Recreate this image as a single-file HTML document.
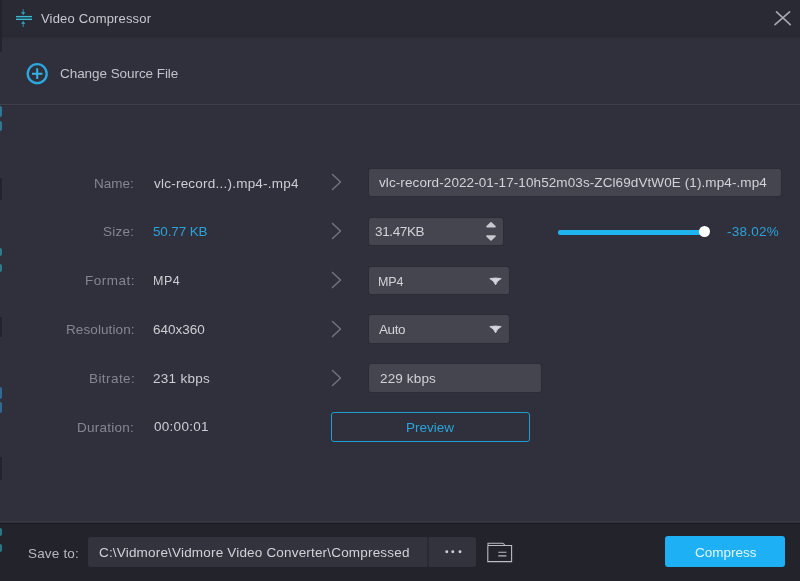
<!DOCTYPE html>
<html><head><meta charset="utf-8">
<style>
*{margin:0;padding:0;box-sizing:border-box}
html,body{width:800px;height:581px;overflow:hidden;background:#30303c;font-family:"Liberation Sans",sans-serif}
.abs{position:absolute}
.tx{position:absolute;white-space:nowrap;line-height:16px;will-change:transform}
.box{position:absolute;background:#45454f;border-radius:2.5px;box-shadow:0 0 0 1px #2c2c36}
</style></head><body>
<div class="abs" style="left:0;top:0;width:800px;height:36px;background:#2a2a35"></div>
<div class="abs" style="left:0;top:35px;width:800px;height:2px;background:#282832"></div>
<div class="abs" style="left:0;top:37px;width:800px;height:1.5px;background:#2d2d38"></div>
<svg class="abs" style="left:0;top:0" width="40" height="36" viewBox="0 0 40 36">
  <rect x="16" y="17.2" width="16" height="1.6" fill="#1f4c5c"/>
  <g stroke="#3db9d0" fill="none" stroke-width="1.25">
    <line x1="16" y1="16.55" x2="32" y2="16.55"/>
    <line x1="16" y1="19.4" x2="32" y2="19.4"/>
  </g>
  <g stroke="#2a93aa" fill="none" stroke-width="1">
    <line x1="23.2" y1="9.2" x2="23.2" y2="13"/>
    <line x1="23.2" y1="23" x2="23.2" y2="27"/>
  </g>
  <path d="M21.1 12 L25.3 12 L23.2 15.2Z M21.1 24 L25.3 24 L23.2 20.8Z" fill="#2a9cb4"/>
</svg>
<svg class="abs" style="left:770px;top:5px" width="26" height="26" viewBox="0 0 26 26">
  <path d="M6.5 6.8 L20.2 19.6 M19.6 6.8 L5 19.6" stroke="#a8a8b2" stroke-width="1.6" stroke-linecap="round"/>
</svg>
<svg class="abs" style="left:25px;top:62px" width="24" height="24" viewBox="0 0 24 24">
  <circle cx="12.2" cy="11.7" r="9.5" stroke="#2ba8e0" stroke-width="2.3" fill="none"/>
  <path d="M12.2 6.3 V17.1 M7 11.7 H17.4" stroke="#34b2ea" stroke-width="2"/>
</svg>
<div class="abs" style="left:0;top:104px;width:800px;height:1px;background:#40404b"></div>
<div class="abs" style="left:0;top:105px;width:800px;height:1px;background:#2d2d38"></div>
<svg class="abs" style="left:330px;top:173px" width="12" height="18" viewBox="0 0 12 18"><path d="M2.5 1.5 L10.5 9 L2.5 16.5" stroke="#72727c" stroke-width="1.5" fill="none" stroke-linecap="round" stroke-linejoin="round"/></svg>
<svg class="abs" style="left:330px;top:222px" width="12" height="18" viewBox="0 0 12 18"><path d="M2.5 1.5 L10.5 9 L2.5 16.5" stroke="#72727c" stroke-width="1.5" fill="none" stroke-linecap="round" stroke-linejoin="round"/></svg>
<svg class="abs" style="left:330px;top:271px" width="12" height="18" viewBox="0 0 12 18"><path d="M2.5 1.5 L10.5 9 L2.5 16.5" stroke="#72727c" stroke-width="1.5" fill="none" stroke-linecap="round" stroke-linejoin="round"/></svg>
<svg class="abs" style="left:330px;top:319.5px" width="12" height="18" viewBox="0 0 12 18"><path d="M2.5 1.5 L10.5 9 L2.5 16.5" stroke="#72727c" stroke-width="1.5" fill="none" stroke-linecap="round" stroke-linejoin="round"/></svg>
<svg class="abs" style="left:330px;top:368.5px" width="12" height="18" viewBox="0 0 12 18"><path d="M2.5 1.5 L10.5 9 L2.5 16.5" stroke="#72727c" stroke-width="1.5" fill="none" stroke-linecap="round" stroke-linejoin="round"/></svg>
<div class="box" style="left:368.5px;top:168.75px;width:412px;height:26.75px"></div>
<div class="box" style="left:369px;top:217.5px;width:134px;height:27.5px"></div>
<svg class="abs" style="left:484px;top:221px" width="14" height="22" viewBox="0 0 14 22"><path d="M3 5.6 L7 1.9 L11 5.6Z M3 15.1 L7 18.8 L11 15.1Z" fill="#c8c8d0" stroke="#c8c8d0" stroke-width="1.6" stroke-linejoin="round"/></svg>
<div class="abs" style="left:558px;top:230px;width:146px;height:4.5px;background:#1fb3ef;border-radius:2px"></div>
<div class="abs" style="left:698.5px;top:225.9px;width:11.6px;height:11.6px;background:#fff;border-radius:50%"></div>
<div class="box" style="left:369px;top:266.5px;width:140px;height:27.5px"></div>
<svg class="abs" style="left:488px;top:276.6px" width="15" height="10" viewBox="0 0 15 10"><path d="M1.8 1.6 Q7.5 0.4 13.2 1.6 Q9 3.6 7.6 7.8 Q6 3.6 1.8 1.6Z" fill="#d4d4dc" stroke="#d4d4dc" stroke-width="0.9" stroke-linejoin="round"/></svg>
<div class="box" style="left:369px;top:315px;width:140px;height:27.5px"></div>
<svg class="abs" style="left:488px;top:325.1px" width="15" height="10" viewBox="0 0 15 10"><path d="M1.8 1.6 Q7.5 0.4 13.2 1.6 Q9 3.6 7.6 7.8 Q6 3.6 1.8 1.6Z" fill="#d4d4dc" stroke="#d4d4dc" stroke-width="0.9" stroke-linejoin="round"/></svg>
<div class="box" style="left:369px;top:364px;width:172px;height:27.75px"></div>
<div class="abs" style="left:330.5px;top:411.75px;width:199.75px;height:30px;border:1.5px solid #1e9fd0;border-radius:3px"></div>

<div class="abs" style="left:0;top:523px;width:800px;height:58px;background:#23232c"></div>
<div class="abs" style="left:0;top:521px;width:800px;height:1px;background:#383843"></div>
<div class="abs" style="left:0;top:522.5px;width:800px;height:1.5px;background:#1a1a22"></div>
<div class="abs" style="left:88px;top:537px;width:388px;height:30px;background:#33333e;border-radius:3px"></div>
<div class="abs" style="left:427px;top:537px;width:1.5px;height:30px;background:#2a2a34"></div>
<svg class="abs" style="left:440px;top:546px" width="26" height="12" viewBox="0 0 26 12">
  <circle cx="6.8" cy="5.8" r="1.45" fill="#d0d0d8"/><circle cx="12.8" cy="5.8" r="1.45" fill="#d0d0d8"/><circle cx="20" cy="5.8" r="1.45" fill="#d0d0d8"/>
</svg>
<svg class="abs" style="left:485px;top:540px" width="30" height="25" viewBox="0 0 30 25">
  <path d="M2.8 5.5 V21.6 H26.6 V5.5 H2.8 M3 5.3 V3.3 H17.5 Q19 3.3 19.8 5.5" stroke="#bcbcc4" stroke-width="1.1" fill="none"/>
  <path d="M13.3 12.3 H21.4 M13.3 15.9 H21.4" stroke="#bcbcc4" stroke-width="1.1"/>
</svg>
<div class="abs" style="left:665px;top:536px;width:120px;height:31px;background:#1eb0f5;border-radius:3px"></div>
<div id="t_title" class="tx" style="left:41.00px;top:11.00px;font-size:13px;letter-spacing:0.173px;color:#c8c8d0;">Video Compressor</div>
<div id="t_change" class="tx" style="left:60.00px;top:65.80px;font-size:13.5px;letter-spacing:-0.059px;color:#c2c2ca;">Change Source File</div>
<div id="l_name" class="tx" style="left:94.00px;top:175.80px;font-size:13.5px;letter-spacing:0.000px;color:#868690;">Name:</div>
<div id="l_size" class="tx" style="left:103.00px;top:224.20px;font-size:13.5px;letter-spacing:0.250px;color:#868690;">Size:</div>
<div id="l_format" class="tx" style="left:85.00px;top:273.00px;font-size:13.5px;letter-spacing:0.500px;color:#868690;">Format:</div>
<div id="l_res" class="tx" style="left:66.00px;top:322.00px;font-size:13.5px;letter-spacing:0.100px;color:#868690;">Resolution:</div>
<div id="l_bit" class="tx" style="left:89.00px;top:371.20px;font-size:13.5px;letter-spacing:0.429px;color:#868690;">Bitrate:</div>
<div id="l_dur" class="tx" style="left:77.00px;top:420.20px;font-size:13.5px;letter-spacing:0.250px;color:#868690;">Duration:</div>
<div id="v_name" class="tx" style="left:154.00px;top:175.60px;font-size:13.5px;letter-spacing:0.227px;color:#cdcdd4;">vlc-record...).mp4-.mp4</div>
<div id="v_size" class="tx" style="left:153.00px;top:224.20px;font-size:13.5px;letter-spacing:-0.143px;color:#2aa3d8;">50.77 KB</div>
<div id="v_format" class="tx" style="left:153.00px;top:273.00px;font-size:12.5px;letter-spacing:0.500px;color:#cdcdd4;">MP4</div>
<div id="v_res" class="tx" style="left:153.00px;top:322.00px;font-size:13.5px;letter-spacing:0.000px;color:#cdcdd4;">640x360</div>
<div id="v_bit" class="tx" style="left:153.00px;top:371.20px;font-size:13.5px;letter-spacing:0.286px;color:#cdcdd4;">231 kbps</div>
<div id="v_dur" class="tx" style="left:154.00px;top:419.40px;font-size:13.5px;letter-spacing:0.286px;color:#cdcdd4;">00:00:01</div>
<div id="b_name" class="tx" style="left:379.00px;top:175.00px;font-size:13.5px;letter-spacing:0.093px;color:#d2d2d8;">vlc-record-2022-01-17-10h52m03s-ZCl69dVtW0E (1).mp4-.mp4</div>
<div id="b_size" class="tx" style="left:375.00px;top:224.00px;font-size:13.5px;letter-spacing:-0.367px;color:#d2d2d8;">31.47KB</div>
<div id="pct" class="tx" style="left:727.00px;top:224.40px;font-size:13.5px;letter-spacing:0.250px;color:#2aa3d8;">-38.02%</div>
<div id="b_format" class="tx" style="left:378.00px;top:273.80px;font-size:12.5px;letter-spacing:-0.100px;color:#d2d2d8;">MP4</div>
<div id="b_res" class="tx" style="left:379.00px;top:322.00px;font-size:13.5px;letter-spacing:-0.400px;color:#d2d2d8;">Auto</div>
<div id="b_bit" class="tx" style="left:380.00px;top:370.60px;font-size:13.5px;letter-spacing:0.143px;color:#d2d2d8;">229 kbps</div>
<div id="preview" class="tx" style="left:406.00px;top:420.00px;font-size:13.5px;letter-spacing:-0.000px;color:#2aa3d8;">Preview</div>
<div id="saveto" class="tx" style="left:28.00px;top:545.60px;font-size:13.5px;letter-spacing:0.179px;color:#b8b8c0;">Save to:</div>
<div id="path" class="tx" style="left:99.00px;top:545.00px;font-size:13.5px;letter-spacing:0.182px;color:#d2d2d8;">C:\Vidmore\Vidmore Video Converter\Compressed</div>
<div id="compress" class="tx" style="left:695.00px;top:545.20px;font-size:13.5px;letter-spacing:0.000px;color:#e4f6ff;">Compress</div>
<div class="abs" style="left:0;top:0px;width:1.5px;height:52px;background:#23232d"></div><div class="abs" style="left:0;top:178px;width:1.5px;height:22px;background:#23232d"></div><div class="abs" style="left:0;top:317px;width:1.5px;height:20px;background:#23232d"></div><div class="abs" style="left:0;top:457px;width:1.5px;height:23px;background:#23232d"></div>
<div class="abs" style="left:-1px;top:106px;width:2.5px;height:11px;background:#2f95c0;opacity:.7;border-radius:0 2px 2px 0"></div><div class="abs" style="left:-1px;top:121px;width:2.5px;height:10px;background:#2f95c0;opacity:.7;border-radius:0 2px 2px 0"></div><div class="abs" style="left:-1px;top:248px;width:2.5px;height:8px;background:#2c9cb0;opacity:.7;border-radius:0 2px 2px 0"></div><div class="abs" style="left:-1px;top:264px;width:2.5px;height:8px;background:#2c9cb0;opacity:.7;border-radius:0 2px 2px 0"></div><div class="abs" style="left:-1px;top:387px;width:2.5px;height:12px;background:#2f85c0;opacity:.7;border-radius:0 2px 2px 0"></div><div class="abs" style="left:-1px;top:402px;width:2.5px;height:11px;background:#2f85c0;opacity:.7;border-radius:0 2px 2px 0"></div><div class="abs" style="left:-1px;top:528px;width:2.5px;height:8px;background:#2c9cb0;opacity:.7;border-radius:0 2px 2px 0"></div><div class="abs" style="left:-1px;top:544px;width:2.5px;height:8px;background:#2c9cb0;opacity:.7;border-radius:0 2px 2px 0"></div>
</body></html>
